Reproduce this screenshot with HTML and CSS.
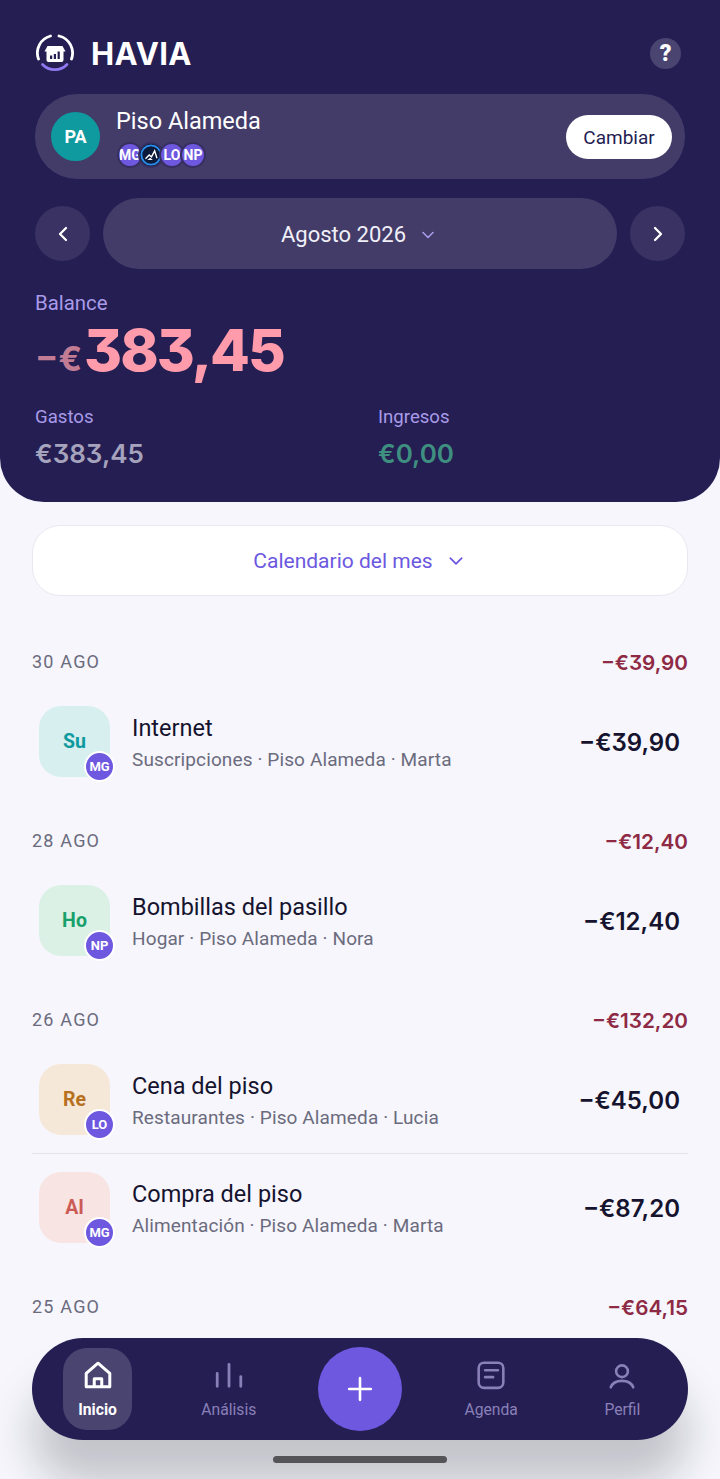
FILE: index.html
```html
<!DOCTYPE html>
<html lang="es">
<head>
  <meta charset="UTF-8">
  <meta name="viewport" content="width=device-width, initial-scale=1.0">
  <title>Havia</title>
  <link rel="stylesheet" href="styles.css">
</head>
<body>

<header class="top">
  <div class="brand-row">
    <div class="brand">
      <svg class="logo" viewBox="0 0 38 38" fill="none">
        <path d="M2.5 25A17.5 17.5 0 0 1 14.5 2" stroke="#fff" stroke-width="2.8" stroke-linecap="round"/>
        <path d="M23 2A17.5 17.5 0 0 1 35.5 25" stroke="#fff" stroke-width="2.8" stroke-linecap="round"/>
        <path d="M6.5 30.5A17 17 0 0 0 31 30.5" stroke="#8f78f0" stroke-width="2.8" stroke-linecap="round"/>
        <path d="M11.5 12h15l3 5.5H8.5z" fill="#fff"/>
        <rect x="10.5" y="15" width="17" height="13" rx="2" fill="#fff"/>
        <path d="M14 21.5h2.2V25H14zM17.8 20H20v5h-2.2zM21.6 17.5h2.2V25h-2.2z" fill="#241e53"/>
      </svg>
      <span class="brand-name">HAVIA</span>
    </div>
    <span class="help">?</span>
  </div>

  <div class="home-card">
    <span class="home-avatar">PA</span>
    <div class="home-info">
      <div class="home-name">Piso Alameda</div>
      <div class="members">
        <span class="member">MG</span>
        <span class="member member-pic">
          <svg viewBox="0 0 24 24" fill="none">
            <circle cx="12" cy="12" r="10.5" fill="#0d1b3a" stroke="#2b8ff0" stroke-width="2"/>
            <path d="M6 16l4-4 2.5 2L16 7.5l2.5 8" stroke="#fff" stroke-width="1.5"/>
            <path d="M8 17.5l3-2.5 3 2.5z" fill="#fff"/>
          </svg>
        </span>
        <span class="member">LO</span>
        <span class="member">NP</span>
      </div>
    </div>
    <button class="switch-btn">Cambiar</button>
  </div>

  <div class="month-row">
    <span class="month-arrow">
      <svg viewBox="0 0 24 24" width="24" height="24" fill="none" stroke="#fff" stroke-width="2.3" stroke-linecap="round" stroke-linejoin="round"><path d="M15 6l-6 6 6 6"/></svg>
    </span>
    <div class="month-pill">
      <span>Agosto 2026</span>
      <svg viewBox="0 0 16 16" width="16" height="16" fill="none" stroke="#a99be8" stroke-width="1.6" stroke-linecap="round" stroke-linejoin="round"><path d="M3 5.5l5 5 5-5"/></svg>
    </div>
    <span class="month-arrow">
      <svg viewBox="0 0 24 24" width="24" height="24" fill="none" stroke="#fff" stroke-width="2.3" stroke-linecap="round" stroke-linejoin="round"><path d="M9 6l6 6-6 6"/></svg>
    </span>
  </div>

  <div class="label label-big">Balance</div>
  <div class="balance"><span class="balance-sign">−€</span><span class="balance-num">383,45</span></div>

  <div class="totals">
    <div>
      <div class="label">Gastos</div>
      <div class="total total-out">€383,45</div>
    </div>
    <div>
      <div class="label">Ingresos</div>
      <div class="total total-in">€0,00</div>
    </div>
  </div>
</header>

<main class="content">
  <button class="calendar-btn">
    <span>Calendario del mes</span>
    <svg viewBox="0 0 16 16" width="18" height="18" fill="none" stroke="#6c58e0" stroke-width="1.6" stroke-linecap="round" stroke-linejoin="round"><path d="M3 5.5l5 5 5-5"/></svg>
  </button>

  <section class="day">
    <div class="day-head"><span class="day-date">30 AGO</span><span class="day-total">−€39,90</span></div>
    <div class="row">
      <div class="cat cat-su">Su<span class="badge">MG</span></div>
      <div class="row-text">
        <div class="row-title">Internet</div>
        <div class="row-sub">Suscripciones · Piso Alameda · Marta</div>
      </div>
      <div class="row-amount">−€39,90</div>
    </div>
  </section>

  <section class="day">
    <div class="day-head"><span class="day-date">28 AGO</span><span class="day-total">−€12,40</span></div>
    <div class="row">
      <div class="cat cat-ho">Ho<span class="badge">NP</span></div>
      <div class="row-text">
        <div class="row-title">Bombillas del pasillo</div>
        <div class="row-sub">Hogar · Piso Alameda · Nora</div>
      </div>
      <div class="row-amount">−€12,40</div>
    </div>
  </section>

  <section class="day">
    <div class="day-head"><span class="day-date">26 AGO</span><span class="day-total">−€132,20</span></div>
    <div class="row">
      <div class="cat cat-re">Re<span class="badge">LO</span></div>
      <div class="row-text">
        <div class="row-title">Cena del piso</div>
        <div class="row-sub">Restaurantes · Piso Alameda · Lucia</div>
      </div>
      <div class="row-amount">−€45,00</div>
    </div>
    <div class="row row-line">
      <div class="cat cat-al">Al<span class="badge">MG</span></div>
      <div class="row-text">
        <div class="row-title">Compra del piso</div>
        <div class="row-sub">Alimentación · Piso Alameda · Marta</div>
      </div>
      <div class="row-amount">−€87,20</div>
    </div>
  </section>

  <section class="day">
    <div class="day-head"><span class="day-date">25 AGO</span><span class="day-total">−€64,15</span></div>
  </section>
</main>

<nav class="tabbar">
  <div class="tab tab-on">
    <svg viewBox="0 0 28 28" width="30" height="30" fill="none" stroke="#fff" stroke-width="2.8" stroke-linejoin="round"><path d="M3 12.5L14 3l11 9.5V25H3z"/><path d="M10.5 25v-7.5h7V25"/></svg>
    <span>Inicio</span>
  </div>
  <div class="tab">
    <svg viewBox="0 0 28 28" width="30" height="30" fill="none" stroke="#8a80b8" stroke-width="2.6" stroke-linecap="round"><path d="M3 12.5v12M14 4v20.5M25 15.5v9"/></svg>
    <span>Análisis</span>
  </div>
  <button class="fab">
    <svg viewBox="0 0 24 24" width="26" height="26" fill="none" stroke="#fff" stroke-width="2.4" stroke-linecap="round"><path d="M12 2v20M2 12h20"/></svg>
  </button>
  <div class="tab">
    <svg viewBox="0 0 28 28" width="30" height="30" fill="none" stroke="#8a80b8" stroke-width="2.4" stroke-linecap="round"><rect x="2.5" y="2.5" width="23" height="23.5" rx="5"/><path d="M8.5 9.5h12M8.5 16H16"/></svg>
    <span>Agenda</span>
  </div>
  <div class="tab">
    <svg viewBox="0 0 28 28" width="30" height="30" fill="none" stroke="#8a80b8" stroke-width="2.4" stroke-linecap="round"><circle cx="14" cy="10.5" r="5.5"/><path d="M3.5 25.5C5 21.5 9 19.5 14 19.5s9 2 10.5 6"/></svg>
    <span>Perfil</span>
  </div>
</nav>
<div class="home-bar"></div>

</body>
</html>
```

FILE: styles.css
```css
* {
  box-sizing: border-box;
}
body {
  margin: 0;
  height: 1479px;
  overflow: hidden;
  position: relative;
  font-family: Roboto, "Liberation Sans", sans-serif;
  background-color: #f6f6fc;
  color: #15132e;
}
button {
  border: none;
  font-family: inherit;
}

/* top panel */
.top {
  height: 502px;
  padding: 31px 35px 0;
  background-color: #241e53;
  border-radius: 0 0 44px 44px;
}
.brand-row {
  display: flex;
  align-items: center;
  justify-content: space-between;
  height: 44px;
  padding-right: 4px;
}
.brand {
  display: flex;
  align-items: center;
  gap: 17px;
}
.logo {
  width: 38px;
  height: 38px;
  margin-left: 1px;
}
.brand-name {
  font-family: Inter, sans-serif;
  font-size: 31px;
  font-weight: 700;
  color: #fff;
  letter-spacing: 0.4px;
}
.help {
  width: 31px;
  height: 31px;
  display: flex;
  align-items: center;
  justify-content: center;
  border-radius: 50%;
  background-color: #4a4470;
  color: #fff;
  font-size: 23px;
  font-weight: 900;
}

.home-card {
  height: 85px;
  margin-top: 19px;
  padding: 0 13px 0 16px;
  display: flex;
  align-items: center;
  border-radius: 42px;
  background-color: #433c69;
}
.home-avatar {
  width: 49px;
  height: 49px;
  flex: none;
  display: flex;
  align-items: center;
  justify-content: center;
  border-radius: 50%;
  background-color: #0e9a9e;
  color: #fff;
  font-size: 18px;
  font-weight: 700;
}
.home-info {
  flex: 1;
  margin-left: 16px;
}
.home-name {
  font-size: 23.5px;
  line-height: 30px;
  color: #fff;
}
.members {
  display: flex;
  margin: 6px 0 0 1px;
}
.member {
  width: 26px;
  height: 26px;
  flex: none;
  margin-right: -5px;
  display: flex;
  align-items: center;
  justify-content: center;
  overflow: hidden;
  border: 2px solid #362f60;
  border-radius: 50%;
  background-color: #6f58e0;
  color: #fff;
  font-size: 14px;
  font-weight: 700;
}
.member-pic {
  background-color: #0d1b3a;
}
.member-pic svg {
  width: 100%;
  height: 100%;
}
.switch-btn {
  width: 106px;
  height: 44px;
  padding-top: 2px;
  border-radius: 22px;
  background-color: #fff;
  color: #241e53;
  font-size: 19px;
}

.month-row {
  margin-top: 19px;
  display: flex;
  align-items: center;
  gap: 13px;
}
.month-arrow {
  width: 55px;
  height: 55px;
  flex: none;
  display: flex;
  align-items: center;
  justify-content: center;
  border-radius: 50%;
  background-color: #393262;
}
.month-pill {
  flex: 1;
  height: 71px;
  padding: 2px 3px 0 0;
  display: flex;
  align-items: center;
  justify-content: center;
  gap: 14px;
  border-radius: 36px;
  background-color: #433c69;
  color: #f1f0f8;
  font-size: 22px;
}

.label {
  font-size: 18.6px;
  line-height: 24px;
  color: #a99be8;
}
.label-big {
  margin-top: 22px;
  font-size: 20.4px;
}
.balance {
  display: flex;
  align-items: baseline;
  height: 70px;
  font-family: Inter, sans-serif;
  font-feature-settings: "cv09";
  color: #ff9bab;
}
.balance-sign {
  font-size: 34.5px;
  font-weight: 700;
  color: #c27d95;
  margin-right: 2px;
}
.balance-num {
  font-size: 58px;
  font-weight: 800;
  line-height: 70px;
  letter-spacing: -2px;
}
.totals {
  display: grid;
  grid-template-columns: 343px 1fr;
  margin-top: 20px;
}
.total {
  margin-top: 9px;
  font-family: Inter, sans-serif;
  font-feature-settings: "cv09";
  font-size: 26px;
  line-height: 32px;
  font-weight: 600;
}
.total-out {
  color: #a6a3bd;
}
.total-in {
  color: #3f8f80;
}

/* list */
.content {
  padding: 23px 32px 0;
}
.calendar-btn {
  width: 100%;
  height: 71px;
  padding: 0 2px 0 0;
  display: flex;
  align-items: center;
  justify-content: center;
  gap: 14px;
  border: 1.5px solid #e8e8f1;
  border-radius: 28px;
  background-color: #fff;
  color: #6c58e0;
  font-size: 21px;
}
.day {
  margin-top: 52px;
}
.calendar-btn + .day {
  margin-top: 54px;
}
.day-head {
  height: 24px;
  margin-bottom: 32px;
  display: flex;
  align-items: center;
  justify-content: space-between;
}
.day-date {
  padding-bottom: 2px;
  font-size: 18px;
  letter-spacing: 1.2px;
  color: #6b6b7d;
}
.day-total {
  font-family: Inter, sans-serif;
  font-feature-settings: "cv09";
  font-size: 20.7px;
  font-weight: 600;
  color: #8f2a45;
}
.row {
  height: 71px;
  padding: 0 8px 0 7px;
  display: flex;
  align-items: center;
}
.row-line {
  height: 90px;
  margin-top: 18px;
  padding-top: 18px;
  border-top: 1.5px solid #e3e3ea;
}
.cat {
  width: 71px;
  height: 71px;
  flex: none;
  position: relative;
  display: flex;
  align-items: center;
  justify-content: center;
  border-radius: 22px;
  font-size: 19.5px;
  font-weight: 700;
}
.cat-su { background-color: #d8eff0; color: #0e9a9e; }
.cat-ho { background-color: #dcf1e6; color: #17a06a; }
.cat-re { background-color: #f6e8d9; color: #b7701f; }
.cat-al { background-color: #f8e4e2; color: #cc5a55; }
.badge {
  position: absolute;
  right: -5px;
  bottom: -5px;
  width: 31px;
  height: 31px;
  display: flex;
  align-items: center;
  justify-content: center;
  border: 2px solid #fff;
  border-radius: 50%;
  background-color: #6f58e0;
  color: #fff;
  font-size: 13px;
  font-weight: 700;
}
.row-text {
  flex: 1;
  margin-left: 22px;
  padding-top: 2px;
}
.row-title {
  font-size: 23.5px;
  line-height: 30px;
  color: #15132e;
}
.row-sub {
  margin-top: 5px;
  font-size: 19px;
  line-height: 24px;
  letter-spacing: 0.12px;
  color: #6b6b7d;
}
.row-amount {
  padding-top: 2px;
  font-family: Inter, sans-serif;
  font-feature-settings: "cv09";
  font-size: 24px;
  font-weight: 600;
  color: #15132e;
}

/* bottom bar, sits over the list */
.tabbar {
  position: absolute;
  left: 32px;
  top: 1338px;
  width: 656px;
  height: 102px;
  display: grid;
  grid-template-columns: repeat(5, 1fr);
  align-items: center;
  justify-items: center;
  border-radius: 51px;
  background-color: #241e53;
  box-shadow: 0 44px 44px rgba(20, 20, 30, 0.22);
}
.tab {
  width: 69px;
  height: 82px;
  display: flex;
  flex-direction: column;
  align-items: center;
  justify-content: center;
  gap: 10px;
  border-radius: 24px;
  color: #8a80b8;
  font-size: 15.7px;
  line-height: 19px;
}
.tab-on {
  background-color: #4a4470;
  color: #fff;
  font-weight: 700;
}
.fab {
  width: 84px;
  height: 84px;
  display: flex;
  align-items: center;
  justify-content: center;
  border-radius: 50%;
  background-color: #6f58e0;
}
.home-bar {
  position: absolute;
  left: 273px;
  top: 1456px;
  width: 174px;
  height: 7px;
  border-radius: 4px;
  background-color: #555459;
}
```
